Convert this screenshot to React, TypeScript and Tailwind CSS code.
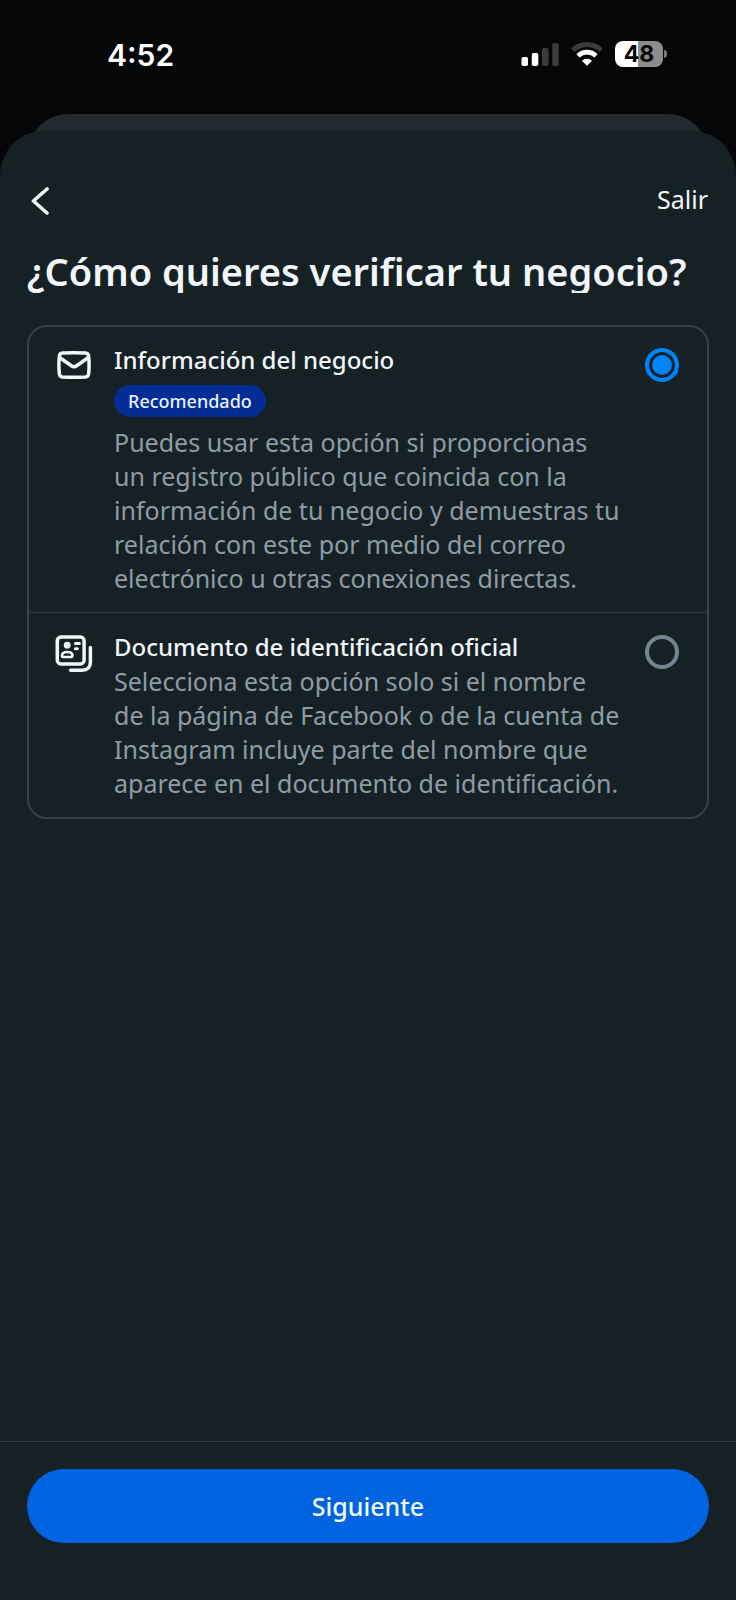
import { useState } from "react";
import type { ReactNode } from "react";

function StatusBar() {
  return (
    <div className="flex h-[114px] items-start justify-between pt-9 pr-[69px] pl-[107px] text-white">
      <span className="font-['Inter',sans-serif] text-[30px] leading-[38px] font-semibold">4:52</span>
      <div className="flex h-[36px] items-center gap-3">
        <svg width="38" height="24" viewBox="0 0 38 24" aria-hidden="true">
          <rect x="0.5" y="15" width="6.5" height="9" rx="1.8" fill="#fff" />
          <rect x="10.8" y="11" width="6.5" height="13" rx="1.8" fill="#fff" />
          <rect x="21" y="6" width="6.5" height="18" rx="1.8" fill="#3b3c3e" />
          <rect x="31.3" y="1" width="6.5" height="23" rx="1.8" fill="#3b3c3e" />
        </svg>
        <svg width="32" height="24" viewBox="0 0 32 24" fill="none" aria-hidden="true">
          <path d="M1.8 8.2 A20.5 20.5 0 0 1 30.2 8.2" stroke="#3b3c3e" strokeWidth="4.8" />
          <path d="M7 13.8 A12.8 12.8 0 0 1 25 13.8" stroke="#fff" strokeWidth="4.6" />
          <path d="M16 23.8 L10.9 18.8 A7.3 7.3 0 0 1 21.1 18.8 Z" fill="#fff" />
        </svg>
        <div className="flex items-center gap-px">
          <div className="flex h-[26px] w-12 items-center justify-center rounded-[8px] bg-linear-to-r from-white from-48% to-[#8b8c8e] to-48% font-['Inter',sans-serif] text-[23px] leading-[26px] font-bold text-[#040608]">
            48
          </div>
          <div className="h-2 w-[3px] rounded-r-full bg-[#77787a]" />
        </div>
      </div>
    </div>
  );
}

function MailIcon() {
  return (
    <svg width="34" height="32" viewBox="0 0 34 32" fill="none" stroke="#f1f6fa" strokeWidth="3.5" strokeLinejoin="round" aria-hidden="true">
      <path d="M5.4 2.1 Q17 1.5 28.6 2.1 Q31.2 2.3 31.6 5 Q32.6 14 31.6 23 Q31.2 25.7 28.6 25.9 Q17 26.5 5.4 25.9 Q2.8 25.7 2.4 23 Q1.4 14 2.4 5 Q2.8 2.3 5.4 2.1 Z" />
      <path d="M2.2 6.2 L14.4 14.8 Q17 16.6 19.6 14.8 L31.8 6.2" />
    </svg>
  );
}

function IdIcon() {
  return (
    <svg width="38" height="38" viewBox="0 0 38 38" fill="none" stroke="#f1f6fa" strokeLinecap="round" aria-hidden="true">
      <rect x="2.3" y="2.1" width="26.8" height="26.8" rx="3.6" strokeWidth="3.5" />
      <path d="M35.4 12.4 V27 Q35.4 35.2 27 35.2 H15.6" strokeWidth="3.5" />
      <circle cx="12.2" cy="10.2" r="3.4" fill="#f1f6fa" stroke="none" />
      <path d="M7 20.4 Q7 17 12.3 17 Q17.4 17 17.4 20.4 Q17.4 22 15.4 22 H9 Q7 22 7 20.4 Z" strokeWidth="2.7" />
      <path d="M20.4 8.4 H24.4 M20.4 13.8 H22.4" strokeWidth="3" />
    </svg>
  );
}

type OptionProps = {
  id: string;
  icon: ReactNode;
  title: string;
  badge?: string;
  lines: string[];
  checked: boolean;
  onSelect: () => void;
};

function Option({ id, icon, title, badge, lines, checked, onSelect }: OptionProps) {
  return (
    <label htmlFor={id} className="flex cursor-pointer pt-4 pr-7 pb-[17px] pl-[26px]">
      <span className="mt-[5px] mr-[21px] flex size-[38px] shrink-0 items-center justify-center">{icon}</span>
      <span className="min-w-0 flex-1 text-[25px] leading-[34px]">
        <span className="block text-[24px] font-medium text-[#f1f6fa]">{title}</span>
        {badge && (
          <span className="my-2 block h-8 w-fit rounded-full bg-[#032d94] px-[14px] text-[18px] leading-8 font-medium text-[#e9f2ff]">
            {badge}
          </span>
        )}
        <span className="block whitespace-nowrap text-[#8f9ca6]">
          {lines.map((line) => (
            <span key={line} className="block">
              {line}
            </span>
          ))}
        </span>
      </span>
      <input
        id={id}
        type="radio"
        name="metodo"
        checked={checked}
        onChange={onSelect}
        className="mt-[5px] size-[34px] shrink-0 appearance-none rounded-full border-4 border-[#758491] checked:border-[#0082fb] checked:bg-[#0082fb] checked:shadow-[inset_0_0_0_3px_#162126]"
      />
    </label>
  );
}

export default function App() {
  const [method, setMethod] = useState("negocio");

  return (
    <div className="flex min-h-screen flex-col bg-[#040608] font-['Noto_Sans',sans-serif]">
      <StatusBar />
      <div className="mx-7 h-14 rounded-t-[40px] bg-[#22292f]" />
      <div className="-mt-[39px] flex flex-1 flex-col rounded-t-[44px] bg-[#162126]">
        <header className="flex items-start justify-between px-7 pt-[51px]">
          <button type="button" aria-label="Atrás" className="flex h-[38px] w-8 items-center pl-[3px]">
            <svg width="18" height="28" viewBox="0 0 18 28" fill="none" aria-hidden="true">
              <path d="M16 2 L2.4 14 L16 26" stroke="#f1f6fa" strokeWidth="3.6" strokeLinecap="round" strokeLinejoin="round" />
            </svg>
          </button>
          <button type="button" className="text-[25px] leading-[34px] text-[#f1f6fa]">
            Salir
          </button>
        </header>
        <main className="flex-1 px-[27px]">
          <h1 className="mt-[25px] h-[48px] overflow-hidden text-[38px] leading-[52px] font-semibold whitespace-nowrap text-[#f1f6fa]">
            ¿Cómo quieres verificar tu negocio?
          </h1>
          <div className="mt-8 rounded-[20px] border-2 border-[#37434a]">
            <Option
              id="negocio"
              icon={<MailIcon />}
              title="Información del negocio"
              badge="Recomendado"
              lines={[
                "Puedes usar esta opción si proporcionas",
                "un registro público que coincida con la",
                "información de tu negocio y demuestras tu",
                "relación con este por medio del correo",
                "electrónico u otras conexiones directas.",
              ]}
              checked={method === "negocio"}
              onSelect={() => setMethod("negocio")}
            />
            <div className="mb-px h-px bg-[#2b373e]" />
            <Option
              id="documento"
              icon={<IdIcon />}
              title="Documento de identificación oficial"
              lines={[
                "Selecciona esta opción solo si el nombre",
                "de la página de Facebook o de la cuenta de",
                "Instagram incluye parte del nombre que",
                "aparece en el documento de identificación.",
              ]}
              checked={method === "documento"}
              onSelect={() => setMethod("documento")}
            />
          </div>
        </main>
        <footer className="border-t border-[#2f3b42] px-[27px] pt-[27px] pb-[57px]">
          <button type="button" className="h-[74px] w-full rounded-full bg-[#0064e0] text-[25px] leading-[34px] font-medium text-[#f1f6fa]">
            Siguiente
          </button>
        </footer>
      </div>
    </div>
  );
}
